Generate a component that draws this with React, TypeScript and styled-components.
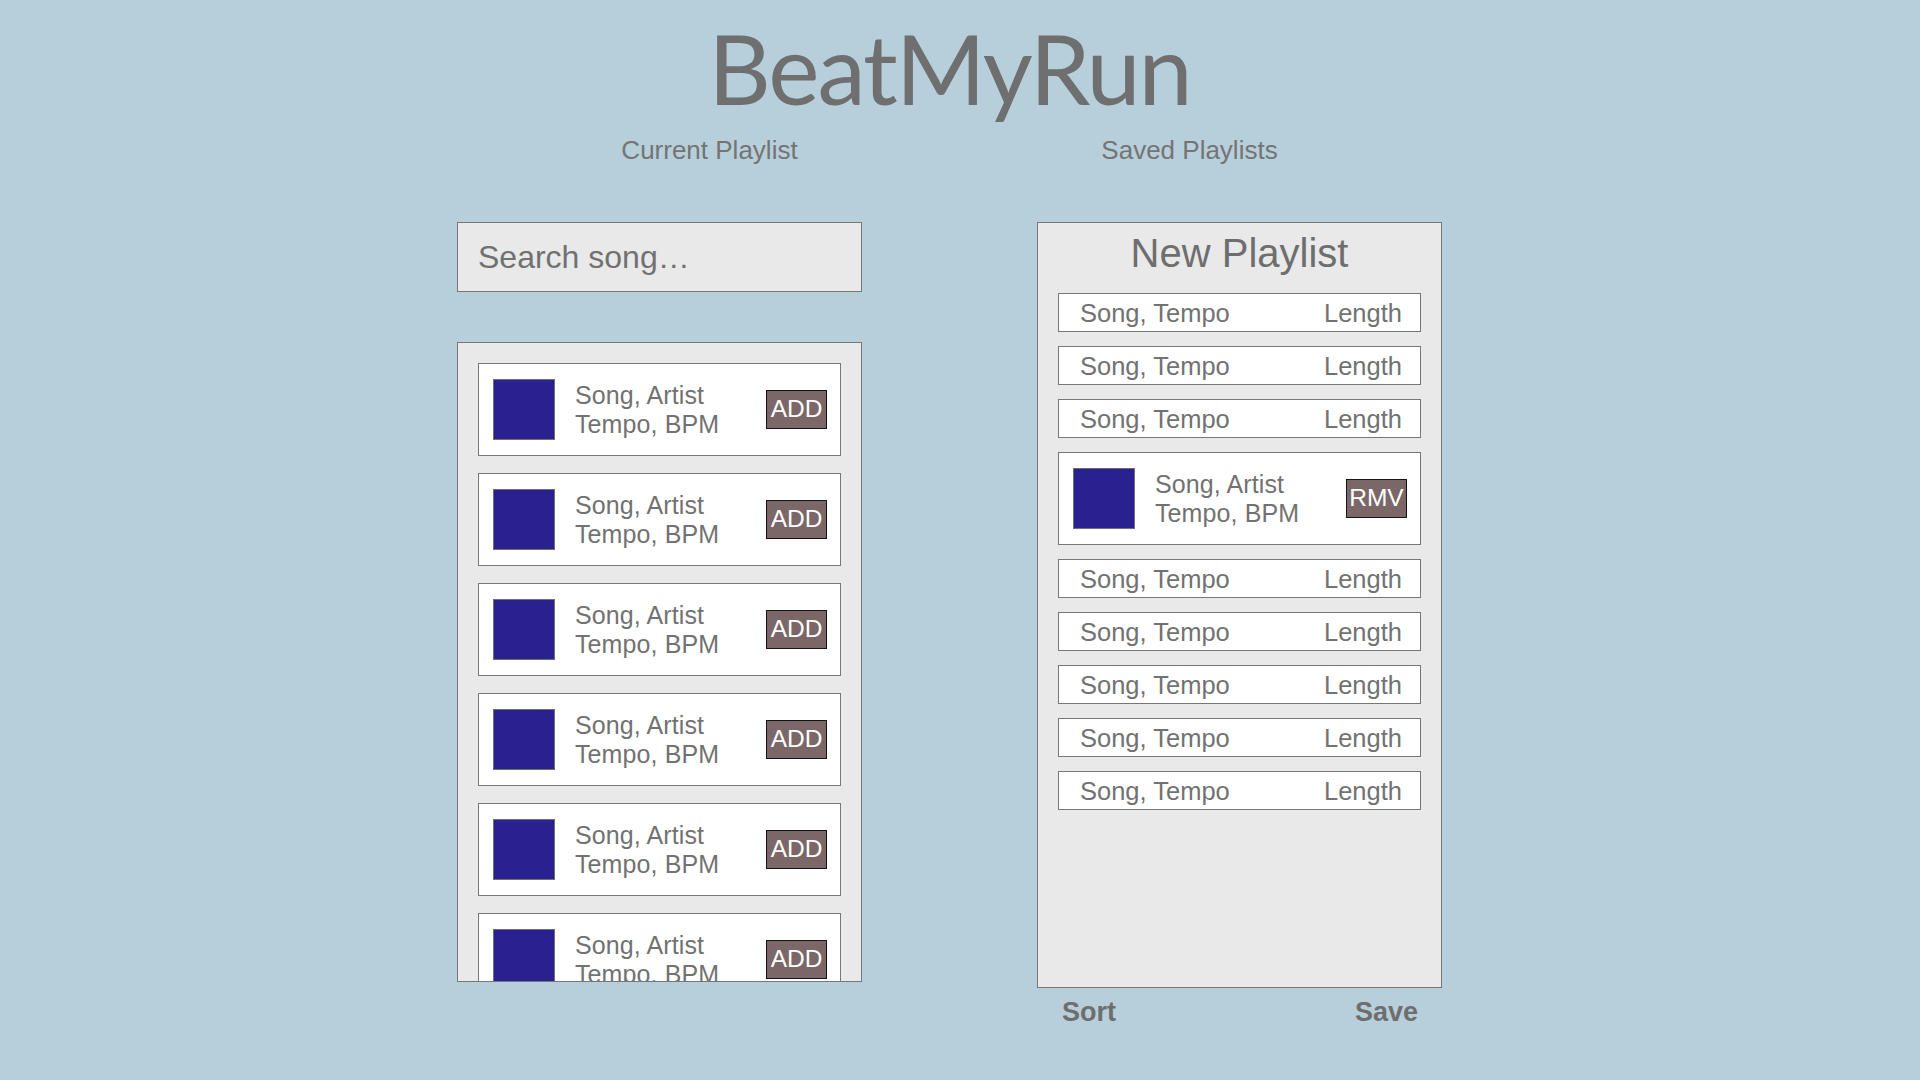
import React from "react";
import styled, { createGlobalStyle } from "styled-components";

const GlobalStyle = createGlobalStyle`
  html, body { margin: 0; padding: 0; }
  body {
    background: #b7cfdb;
    font-family: "Liberation Sans", Arial, sans-serif;
    color: #727272;
  }
`;

const Page = styled.div`
  min-height: 1080px;
  box-sizing: border-box;
  display: flex;
  flex-direction: column;
  align-items: center;
  padding: 19px 21px 0 0;
`;

const Title = styled.h1`
  margin: 0;
  font-family: Lato, "Open Sans", sans-serif;
  font-weight: 400;
  font-size: 97px;
  line-height: 97px;
  color: #6f6f6f;
  letter-spacing: -2px;
`;

const Tabs = styled.nav`
  display: flex;
  gap: 180px;
  margin-top: 19px;
`;

const Tab = styled.div`
  width: 300px;
  text-align: center;
  font-size: 26px;
  line-height: 30px;
  color: #747474;
`;

const Columns = styled.div`
  display: flex;
  align-items: flex-start;
  gap: 175px;
  margin-top: 57px;
`;

const Column = styled.div`
  width: 405px;
  display: flex;
  flex-direction: column;
`;

const Search = styled.input`
  box-sizing: border-box;
  width: 100%;
  height: 70px;
  margin: 0 0 50px;
  padding: 0 20px;
  background: #e9e9e9;
  border: 1px solid #777777;
  border-radius: 0;
  outline: none;
  font-family: "Liberation Sans", Arial, sans-serif;
  font-size: 32px;
  color: #717171;
  &::placeholder { color: #717171; opacity: 1; }
`;

const Panel = styled.div<{ $height: number; $padTop: number }>`
  box-sizing: border-box;
  height: ${(p) => p.$height}px;
  padding: ${(p) => p.$padTop}px 20px 0 20px;
  background: #e9e9e9;
  border: 1px solid #777777;
  overflow: hidden;
  display: flex;
  flex-direction: column;
`;

const CardList = styled.div<{ $gap: number }>`
  display: flex;
  flex-direction: column;
  gap: ${(p) => p.$gap}px;
`;

const Card = styled.div`
  box-sizing: border-box;
  flex-shrink: 0;
  height: 93px;
  display: flex;
  align-items: center;
  padding: 0 13px 0 14px;
  background: #ffffff;
  border: 1px solid #777777;
`;

const Cover = styled.div`
  box-sizing: border-box;
  width: 62px;
  height: 61px;
  flex-shrink: 0;
  background: #2a2190;
  border: 1px solid #6f6f6f;
`;

const Info = styled.div`
  margin-left: 20px;
  font-size: 25px;
  line-height: 29px;
  letter-spacing: 0.1px;
  color: #727272;
  white-space: nowrap;
`;

const ActionButton = styled.button`
  box-sizing: border-box;
  margin-left: auto;
  width: 61px;
  height: 39px;
  padding: 0;
  display: flex;
  align-items: center;
  justify-content: center;
  background: #7b6767;
  border: 1px solid #141414;
  border-radius: 0;
  color: #ffffff;
  font-family: "Liberation Sans", Arial, sans-serif;
  font-size: 24.5px;
  line-height: 1;
`;

const PanelTitle = styled.h2`
  margin: 0 0 17px;
  font-size: 40px;
  line-height: 46px;
  font-weight: 400;
  text-align: center;
  color: #6e6e6e;
`;

const Row = styled.div`
  box-sizing: border-box;
  flex-shrink: 0;
  height: 39px;
  display: flex;
  align-items: center;
  justify-content: space-between;
  padding: 3px 18px 0 21px;
  background: #ffffff;
  border: 1px solid #777777;
  font-size: 25.5px;
  line-height: 1.15;
  color: #727272;
`;

const Footer = styled.div`
  display: flex;
  justify-content: space-between;
  margin-top: 9px;
  padding: 0 24px 0 25px;
`;

const FooterAction = styled.span`
  font-size: 27px;
  line-height: 31px;
  font-weight: 700;
  color: #6e6e6e;
`;

function SongCard({ action }: { action: string }) {
  return (
    <Card>
      <Cover />
      <Info>
        Song, Artist
        <br />
        Tempo, BPM
      </Info>
      <ActionButton>{action}</ActionButton>
    </Card>
  );
}

function TrackRow() {
  return (
    <Row>
      <span>Song, Tempo</span>
      <span>Length</span>
    </Row>
  );
}

export default function App() {
  return (
    <>
      <GlobalStyle />
      <Page>
        <Title>BeatMyRun</Title>
        <Tabs>
          <Tab>Current Playlist</Tab>
          <Tab>Saved Playlists</Tab>
        </Tabs>
        <Columns>
          <Column>
            <Search placeholder="Search song…" />
            <Panel $height={640} $padTop={20}>
              <CardList $gap={17}>
                {Array.from({ length: 6 }).map((_, i) => (
                  <SongCard key={i} action="ADD" />
                ))}
              </CardList>
            </Panel>
          </Column>
          <Column>
            <Panel $height={766} $padTop={7}>
              <PanelTitle>New Playlist</PanelTitle>
              <CardList $gap={14}>
                <TrackRow />
                <TrackRow />
                <TrackRow />
                <SongCard action="RMV" />
                <TrackRow />
                <TrackRow />
                <TrackRow />
                <TrackRow />
                <TrackRow />
              </CardList>
            </Panel>
            <Footer>
              <FooterAction>Sort</FooterAction>
              <FooterAction>Save</FooterAction>
            </Footer>
          </Column>
        </Columns>
      </Page>
    </>
  );
}
